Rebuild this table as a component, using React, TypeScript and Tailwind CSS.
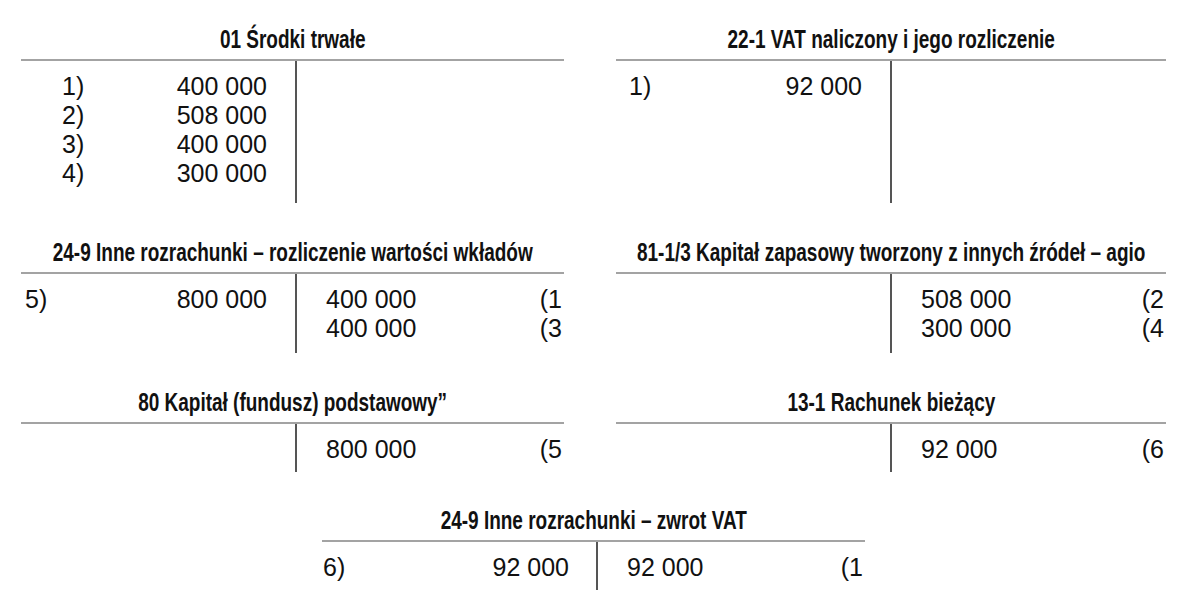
import React from "react";

type Row = { l?: string; a?: string };
type RRow = { a: string; r: string };

const bodyFont = { fontFamily: "'Liberation Sans', Arial, sans-serif" };
const titleFont = { fontFamily: "'Liberation Sans', Arial, sans-serif" };

function Account({
  title,
  left,
  right,
  bodyH,
  leftPad,
  leftNumPad,
}: {
  title: string;
  left: Row[];
  right: RRow[];
  bodyH: string;
  leftPad: string;
  leftNumPad: string;
}) {
  return (
    <div className="flex flex-col">
      <div className="mb-[6px] flex h-[28px] justify-center whitespace-nowrap">
        <span
          className="inline-block origin-center scale-x-[0.73] text-[26px] font-bold leading-[28px] text-[#111]"
          style={titleFont}
        >
          {title}
        </span>
      </div>
      <div className={`flex border-t-2 border-[#a3a3a3] ${bodyH}`}>
        <div className="flex w-[276px] flex-col border-r-2 border-[#555555] pt-[11px]">
          {left.map((r, i) => (
            <div
              key={i}
              className={`flex h-[29px] items-center justify-between text-[25px] leading-[29px] text-[#111] ${leftPad} ${leftNumPad}`}
              style={bodyFont}
            >
              <span>{r.l}</span>
              <span>{r.a}</span>
            </div>
          ))}
        </div>
        <div className="flex flex-1 flex-col pl-[29px] pr-[2px] pt-[11px]">
          {right.map((r, i) => (
            <div
              key={i}
              className="flex h-[29px] items-center justify-between text-[25px] leading-[29px] text-[#111]"
              style={bodyFont}
            >
              <span>{r.a}</span>
              <span>{r.r}</span>
            </div>
          ))}
        </div>
      </div>
    </div>
  );
}

export default function App() {
  return (
    <div className="h-[607px] w-[1200px] overflow-hidden bg-white pl-[21px] pt-[25px]">
      <div className="grid grid-cols-[543px_550px] gap-x-[52px] gap-y-[35px]">
        <Account
          title="01 Środki trwałe"
          left={[
            { l: "1)", a: "400 000" },
            { l: "2)", a: "508 000" },
            { l: "3)", a: "400 000" },
            { l: "4)", a: "300 000" },
          ]}
          right={[]}
          bodyH="h-[144px]"
          leftPad="pl-[41px]"
          leftNumPad="pr-[28px]"
        />
        <Account
          title="22-1 VAT naliczony i jego rozliczenie"
          left={[{ l: "1)", a: "92 000" }]}
          right={[]}
          bodyH="h-[144px]"
          leftPad="pl-[13px]"
          leftNumPad="pr-[28px]"
        />
        <Account
          title="24-9 Inne rozrachunki – rozliczenie wartości wkładów"
          left={[{ l: "5)", a: "800 000" }]}
          right={[
            { a: "400 000", r: "(1" },
            { a: "400 000", r: "(3" },
          ]}
          bodyH="h-[81px]"
          leftPad="pl-[4px]"
          leftNumPad="pr-[28px]"
        />
        <Account
          title="81-1/3 Kapitał zapasowy tworzony z innych źródeł – agio"
          left={[]}
          right={[
            { a: "508 000", r: "(2" },
            { a: "300 000", r: "(4" },
          ]}
          bodyH="h-[81px]"
          leftPad="pl-[4px]"
          leftNumPad="pr-[28px]"
        />
        <Account
          title="80 Kapitał (fundusz) podstawowy”"
          left={[]}
          right={[{ a: "800 000", r: "(5" }]}
          bodyH="h-[50px]"
          leftPad="pl-[4px]"
          leftNumPad="pr-[28px]"
        />
        <Account
          title="13-1 Rachunek bieżący"
          left={[]}
          right={[{ a: "92 000", r: "(6" }]}
          bodyH="h-[50px]"
          leftPad="pl-[4px]"
          leftNumPad="pr-[28px]"
        />
      </div>
      <div className="ml-[301px] mt-[34px] w-[543px]">
        <Account
          title="24-9 Inne rozrachunki – zwrot VAT"
          left={[{ l: "6)", a: "92 000" }]}
          right={[{ a: "92 000", r: "(1" }]}
          bodyH="h-[50px]"
          leftPad="pl-[1px]"
          leftNumPad="pr-[27px]"
        />
      </div>
    </div>
  );
}
